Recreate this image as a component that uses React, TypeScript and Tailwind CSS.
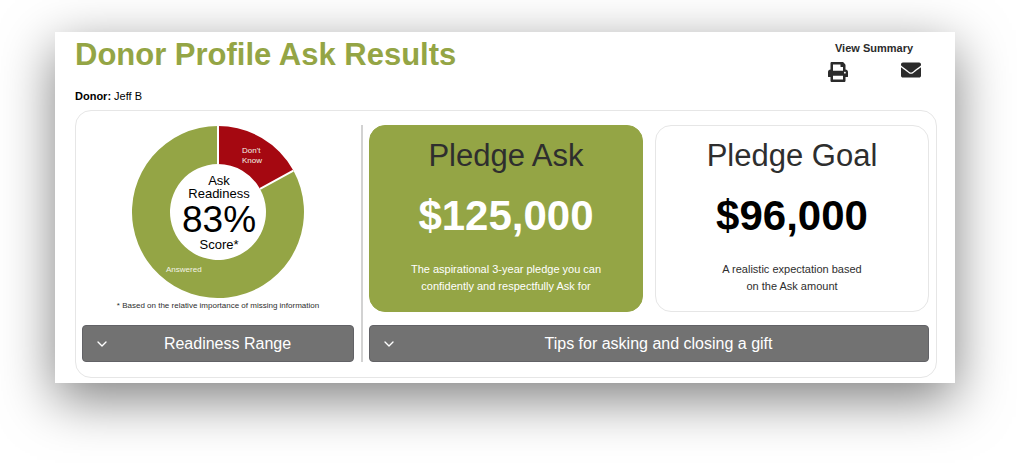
import { useState } from 'react';
import { ChevronDown } from 'lucide-react';
import { FaEnvelope, FaPrint } from 'react-icons/fa';

interface PledgeCardProps {
  title: string;
  amount: string;
  lines: string[];
  highlighted?: boolean;
}

const OUTER_RADIUS = 86;
const INNER_RADIUS = 48;

// Point on a circle around the chart centre, measured clockwise from the top
function pointAt(radius: number, fraction: number) {
  const angle = fraction * 2 * Math.PI;
  const x = OUTER_RADIUS + radius * Math.sin(angle);
  const y = OUTER_RADIUS - radius * Math.cos(angle);
  return `${x.toFixed(2)} ${y.toFixed(2)}`;
}

function slicePath(from: number, to: number) {
  const large = to - from > 0.5 ? 1 : 0;
  return [
    `M${pointAt(OUTER_RADIUS, from)}`,
    `A${OUTER_RADIUS} ${OUTER_RADIUS} 0 ${large} 1 ${pointAt(OUTER_RADIUS, to)}`,
    `L${pointAt(INNER_RADIUS, to)}`,
    `A${INNER_RADIUS} ${INNER_RADIUS} 0 ${large} 0 ${pointAt(INNER_RADIUS, from)}`,
    'Z',
  ].join(' ');
}

function ReadinessChart({ score }: { score: number }) {
  const unknown = 1 - score / 100;

  return (
    <svg
      viewBox="0 0 172 172"
      className="block w-[172px] h-[172px]"
      role="img"
      aria-label={`Ask Readiness ${score}% Score`}
    >
      <path d={slicePath(unknown, 1)} className="fill-[#94a545]" />
      <path d={slicePath(0, unknown)} className="fill-[#a50811]" />
      <path
        d={`M${pointAt(INNER_RADIUS, 0)} L${pointAt(OUTER_RADIUS, 0)} M${pointAt(INNER_RADIUS, unknown)} L${pointAt(OUTER_RADIUS, unknown)}`}
        className="stroke-white stroke-2"
      />
      <g className="fill-[#f3f4e6] text-[8px]">
        <text x="110" y="27">Don't</text>
        <text x="110" y="37">Know</text>
        <text x="34" y="146">Answered</text>
      </g>
      <g className="fill-black text-[13px]" textAnchor="middle">
        <text x="87" y="59">Ask</text>
        <text x="87" y="72">Readiness</text>
        <text x="87" y="106" className="text-[37px]">{score}%</text>
        <text x="87" y="123">Score*</text>
      </g>
    </svg>
  );
}

function PledgeCard({ title, amount, lines, highlighted }: PledgeCardProps) {
  return (
    <section
      className={
        highlighted
          ? 'rounded-2xl border border-[#94a545] bg-[#94a545] pt-2.5 pb-4 text-center text-white'
          : 'rounded-2xl border border-[#e6e6e6] bg-white pt-2.5 pb-4 text-center text-[#2e2e2e]'
      }
    >
      <h2 className="text-[31px] leading-10 text-[#2e2e2e]">{title}</h2>
      <p
        className={
          highlighted
            ? 'mt-4 text-[42px] leading-12 font-bold'
            : 'mt-4 text-[42px] leading-12 font-bold text-black'
        }
      >
        {amount}
      </p>
      <p className="mt-[21px] text-[11px] leading-[17px]">
        {lines.map((line) => (
          <span key={line} className="block">
            {line}
          </span>
        ))}
      </p>
    </section>
  );
}

function AccordionButton({ label }: { label: string }) {
  const [isOpen, setIsOpen] = useState(false);

  return (
    <button
      type="button"
      aria-expanded={isOpen}
      onClick={() => setIsOpen(!isOpen)}
      className="flex w-full items-center gap-1 rounded border border-[#626266] bg-[#727272] pl-[11px] pr-3 h-[37px] text-base text-white"
    >
      <ChevronDown className="h-4 w-4" />
      <span className="flex-1">{label}</span>
    </button>
  );
}

export default function App() {
  return (
    <div className="pt-8 pb-20 pl-[55px] pr-[62px] font-['Liberation_Sans',Arial,sans-serif]">
      <main className="bg-white pl-5 pr-[18px] pb-[5px] shadow-[0_16px_50px_rgba(0,0,0,0.5)]">
        <header className="flex justify-between">
          <div>
            <h1 className="pt-[3px] text-[31px] leading-10 font-bold text-[#94a545]">
              Donor Profile Ask Results
            </h1>
            <p className="mt-[13px] mb-1.5 text-[11px] leading-4 text-black">
              <strong>Donor:</strong> Jeff B
            </p>
          </div>
          <div className="-mr-2.5 w-[146px] pt-2 text-center text-[#2b2b2b]">
            <p className="text-[11px] leading-4 font-bold">View Summary</p>
            <div className="mt-1.5 grid grid-cols-2 justify-items-center items-start">
              <button type="button" aria-label="Print summary">
                <FaPrint className="block h-5 w-5" />
              </button>
              <button type="button" aria-label="Email summary">
                <FaEnvelope className="-mt-0.5 block h-5 w-5" />
              </button>
            </div>
          </div>
        </header>

        <div className="grid grid-cols-[281fr_566fr] rounded-2xl border border-[#e6e6e6] pt-3.5 pb-[15px] pl-1.5 pr-[7px]">
          <div className="flex flex-col items-center border-r-2 border-[#d2d2d2] pt-px pr-[7px]">
            <ReadinessChart score={83} />
            <p className="mt-0.5 mb-auto text-[8px] leading-3 text-[#2e2e2e]">
              * Based on the relative importance of missing information
            </p>
            <AccordionButton label="Readiness Range" />
          </div>

          <div className="flex flex-col gap-[13px] pl-1.5">
            <div className="grid grid-cols-2 gap-3">
              <PledgeCard
                title="Pledge Ask"
                amount="$125,000"
                lines={[
                  'The aspirational 3-year pledge you can',
                  'confidently and respectfully Ask for',
                ]}
                highlighted
              />
              <PledgeCard
                title="Pledge Goal"
                amount="$96,000"
                lines={['A realistic expectation based', 'on the Ask amount']}
              />
            </div>
            <AccordionButton label="Tips for asking and closing a gift" />
          </div>
        </div>
      </main>
    </div>
  );
}
